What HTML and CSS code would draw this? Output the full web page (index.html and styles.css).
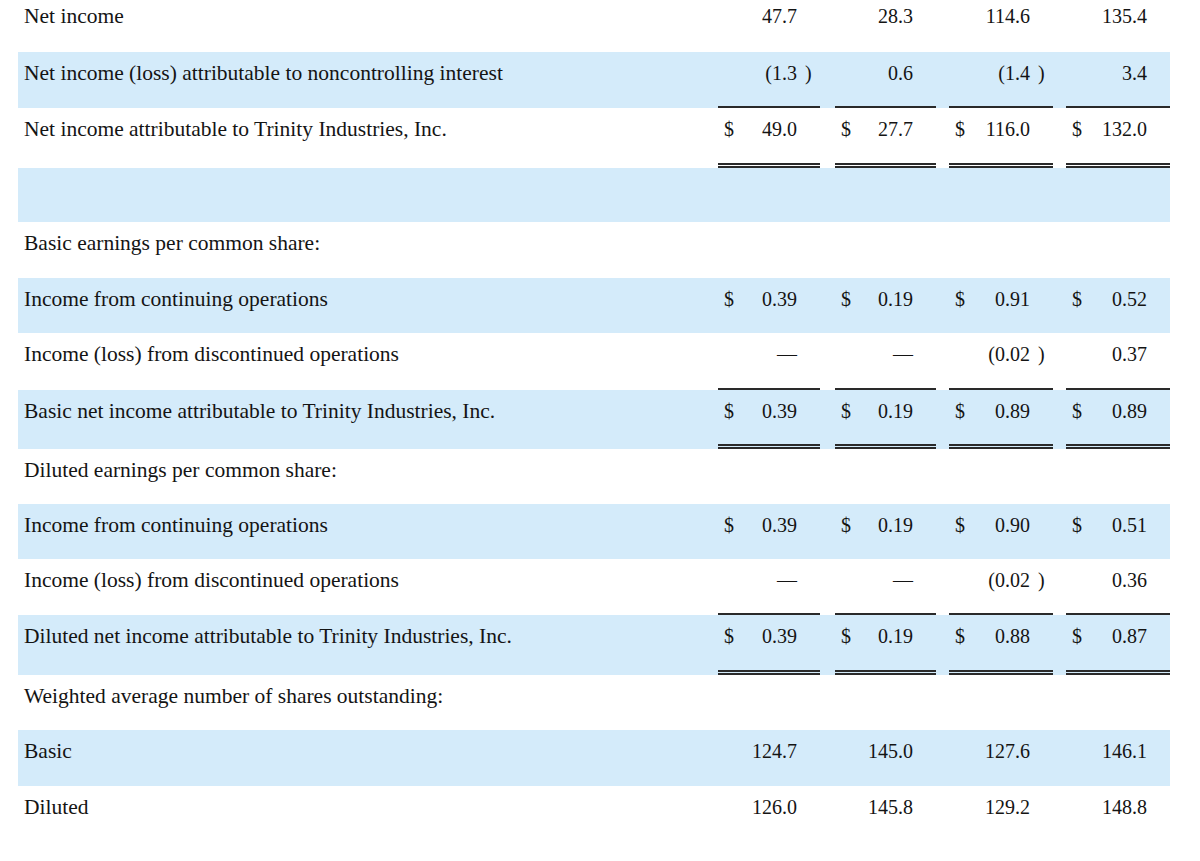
FILE: index.html
```html
<!DOCTYPE html>
<html lang="en">
<head>
<meta charset="utf-8">
<title>Trinity Industries – Earnings per share</title>
<link rel="stylesheet" href="styles.css">
</head>
<body>
<table class="fin">
  <colgroup>
    <col class="c-label">
    <col class="c-n1"><col class="c-g1">
    <col class="c-n2"><col class="c-g2">
    <col class="c-n3"><col class="c-g3">
    <col class="c-n4">
  </colgroup>
  <tbody>
    <tr class="r-first">
      <td class="lbl">Net income</td>
      <td class="num"><div class="cell"><span class="cur"></span><span class="val">47.7</span><span class="par"></span></div></td><td class="gap"></td>
      <td class="num"><div class="cell"><span class="cur"></span><span class="val">28.3</span><span class="par"></span></div></td><td class="gap"></td>
      <td class="num"><div class="cell"><span class="cur"></span><span class="val">114.6</span><span class="par"></span></div></td><td class="gap"></td>
      <td class="num"><div class="cell"><span class="cur"></span><span class="val">135.4</span><span class="par"></span></div></td>
    </tr>
    <tr class="shade under">
      <td class="lbl">Net income (loss) attributable to noncontrolling interest</td>
      <td class="num"><div class="cell"><span class="cur"></span><span class="val">(1.3</span><span class="par">)</span></div></td><td class="gap"></td>
      <td class="num"><div class="cell"><span class="cur"></span><span class="val">0.6</span><span class="par"></span></div></td><td class="gap"></td>
      <td class="num"><div class="cell"><span class="cur"></span><span class="val">(1.4</span><span class="par">)</span></div></td><td class="gap"></td>
      <td class="num"><div class="cell"><span class="cur"></span><span class="val">3.4</span><span class="par"></span></div></td>
    </tr>
    <tr class="total r-60">
      <td class="lbl">Net income attributable to Trinity Industries, Inc.</td>
      <td class="num"><div class="cell"><span class="cur">$</span><span class="val">49.0</span><span class="par"></span></div></td><td class="gap"></td>
      <td class="num"><div class="cell"><span class="cur">$</span><span class="val">27.7</span><span class="par"></span></div></td><td class="gap"></td>
      <td class="num"><div class="cell"><span class="cur">$</span><span class="val">116.0</span><span class="par"></span></div></td><td class="gap"></td>
      <td class="num"><div class="cell"><span class="cur">$</span><span class="val">132.0</span><span class="par"></span></div></td>
    </tr>
    <tr class="shade r-54">
      <td class="lbl"></td>
      <td class="num"></td><td class="gap"></td>
      <td class="num"></td><td class="gap"></td>
      <td class="num"></td><td class="gap"></td>
      <td class="num"></td>
    </tr>
    <tr>
      <td class="lbl">Basic earnings per common share:</td>
      <td class="num"></td><td class="gap"></td>
      <td class="num"></td><td class="gap"></td>
      <td class="num"></td><td class="gap"></td>
      <td class="num"></td>
    </tr>
    <tr class="shade r-55">
      <td class="lbl">Income from continuing operations</td>
      <td class="num"><div class="cell"><span class="cur">$</span><span class="val">0.39</span><span class="par"></span></div></td><td class="gap"></td>
      <td class="num"><div class="cell"><span class="cur">$</span><span class="val">0.19</span><span class="par"></span></div></td><td class="gap"></td>
      <td class="num"><div class="cell"><span class="cur">$</span><span class="val">0.91</span><span class="par"></span></div></td><td class="gap"></td>
      <td class="num"><div class="cell"><span class="cur">$</span><span class="val">0.52</span><span class="par"></span></div></td>
    </tr>
    <tr class="under r-57">
      <td class="lbl">Income (loss) from discontinued operations</td>
      <td class="num"><div class="cell"><span class="cur"></span><span class="val">—</span><span class="par"></span></div></td><td class="gap"></td>
      <td class="num"><div class="cell"><span class="cur"></span><span class="val">—</span><span class="par"></span></div></td><td class="gap"></td>
      <td class="num"><div class="cell"><span class="cur"></span><span class="val">(0.02</span><span class="par">)</span></div></td><td class="gap"></td>
      <td class="num"><div class="cell"><span class="cur"></span><span class="val">0.37</span><span class="par"></span></div></td>
    </tr>
    <tr class="shade total r-59">
      <td class="lbl">Basic net income attributable to Trinity Industries, Inc.</td>
      <td class="num"><div class="cell"><span class="cur">$</span><span class="val">0.39</span><span class="par"></span></div></td><td class="gap"></td>
      <td class="num"><div class="cell"><span class="cur">$</span><span class="val">0.19</span><span class="par"></span></div></td><td class="gap"></td>
      <td class="num"><div class="cell"><span class="cur">$</span><span class="val">0.89</span><span class="par"></span></div></td><td class="gap"></td>
      <td class="num"><div class="cell"><span class="cur">$</span><span class="val">0.89</span><span class="par"></span></div></td>
    </tr>
    <tr class="r-55">
      <td class="lbl">Diluted earnings per common share:</td>
      <td class="num"></td><td class="gap"></td>
      <td class="num"></td><td class="gap"></td>
      <td class="num"></td><td class="gap"></td>
      <td class="num"></td>
    </tr>
    <tr class="shade r-55">
      <td class="lbl">Income from continuing operations</td>
      <td class="num"><div class="cell"><span class="cur">$</span><span class="val">0.39</span><span class="par"></span></div></td><td class="gap"></td>
      <td class="num"><div class="cell"><span class="cur">$</span><span class="val">0.19</span><span class="par"></span></div></td><td class="gap"></td>
      <td class="num"><div class="cell"><span class="cur">$</span><span class="val">0.90</span><span class="par"></span></div></td><td class="gap"></td>
      <td class="num"><div class="cell"><span class="cur">$</span><span class="val">0.51</span><span class="par"></span></div></td>
    </tr>
    <tr class="under">
      <td class="lbl">Income (loss) from discontinued operations</td>
      <td class="num"><div class="cell"><span class="cur"></span><span class="val">—</span><span class="par"></span></div></td><td class="gap"></td>
      <td class="num"><div class="cell"><span class="cur"></span><span class="val">—</span><span class="par"></span></div></td><td class="gap"></td>
      <td class="num"><div class="cell"><span class="cur"></span><span class="val">(0.02</span><span class="par">)</span></div></td><td class="gap"></td>
      <td class="num"><div class="cell"><span class="cur"></span><span class="val">0.36</span><span class="par"></span></div></td>
    </tr>
    <tr class="shade total r-60">
      <td class="lbl">Diluted net income attributable to Trinity Industries, Inc.</td>
      <td class="num"><div class="cell"><span class="cur">$</span><span class="val">0.39</span><span class="par"></span></div></td><td class="gap"></td>
      <td class="num"><div class="cell"><span class="cur">$</span><span class="val">0.19</span><span class="par"></span></div></td><td class="gap"></td>
      <td class="num"><div class="cell"><span class="cur">$</span><span class="val">0.88</span><span class="par"></span></div></td><td class="gap"></td>
      <td class="num"><div class="cell"><span class="cur">$</span><span class="val">0.87</span><span class="par"></span></div></td>
    </tr>
    <tr class="r-55">
      <td class="lbl">Weighted average number of shares outstanding:</td>
      <td class="num"></td><td class="gap"></td>
      <td class="num"></td><td class="gap"></td>
      <td class="num"></td><td class="gap"></td>
      <td class="num"></td>
    </tr>
    <tr class="shade">
      <td class="lbl">Basic</td>
      <td class="num"><div class="cell"><span class="cur"></span><span class="val">124.7</span><span class="par"></span></div></td><td class="gap"></td>
      <td class="num"><div class="cell"><span class="cur"></span><span class="val">145.0</span><span class="par"></span></div></td><td class="gap"></td>
      <td class="num"><div class="cell"><span class="cur"></span><span class="val">127.6</span><span class="par"></span></div></td><td class="gap"></td>
      <td class="num"><div class="cell"><span class="cur"></span><span class="val">146.1</span><span class="par"></span></div></td>
    </tr>
    <tr>
      <td class="lbl">Diluted</td>
      <td class="num"><div class="cell"><span class="cur"></span><span class="val">126.0</span><span class="par"></span></div></td><td class="gap"></td>
      <td class="num"><div class="cell"><span class="cur"></span><span class="val">145.8</span><span class="par"></span></div></td><td class="gap"></td>
      <td class="num"><div class="cell"><span class="cur"></span><span class="val">129.2</span><span class="par"></span></div></td><td class="gap"></td>
      <td class="num"><div class="cell"><span class="cur"></span><span class="val">148.8</span><span class="par"></span></div></td>
    </tr>
  </tbody>
</table>
</body>
</html>
```

FILE: styles.css
```css
html, body {
  margin: 0;
  padding: 0;
  background: #ffffff;
}

body {
  padding: 0 30px 0 18px;
  font-family: "Liberation Serif", "Times New Roman", serif;
  font-size: 21.5px;
  color: #141414;
}

.fin {
  width: 1152px;
  table-layout: fixed;
  border-collapse: separate;
  border-spacing: 0;
}

.c-label { width: 700px; }
.c-n1 { width: 102px; }
.c-g1 { width: 15px; }
.c-n2 { width: 101px; }
.c-g2 { width: 13px; }
.c-n3 { width: 104px; }
.c-g3 { width: 13px; }
.c-n4 { width: 104px; }

.fin tr { height: 56px; }
.fin tr.r-first { height: 52px; }
.fin tr.r-54 { height: 54px; }
.fin tr.r-55 { height: 55px; }
.fin tr.r-57 { height: 57px; }
.fin tr.r-59 { height: 59px; }
.fin tr.r-60 { height: 60px; }

.fin td {
  padding: 9px 0 0 0;
  vertical-align: top;
  line-height: 24px;
  white-space: nowrap;
}

.fin tr.r-first td { padding-top: 4px; }

.fin td.lbl {
  padding-left: 6px;
}

.fin td.num {
  font-size: 20px;
}

.fin tr.shade td {
  background: #d4ebfa;
}

.fin tr.under td.num {
  border-bottom: 2px solid #2a2a2a;
}

.fin tr.total td.num {
  border-bottom: 5px double #2a2a2a;
}

.cell {
  display: flex;
  align-items: baseline;
}

.cur {
  width: 18px;
  padding-left: 6px;
}

.val {
  flex: 1;
  text-align: right;
}

.par {
  width: 23px;
  padding-left: 8px;
  box-sizing: border-box;
}
```
